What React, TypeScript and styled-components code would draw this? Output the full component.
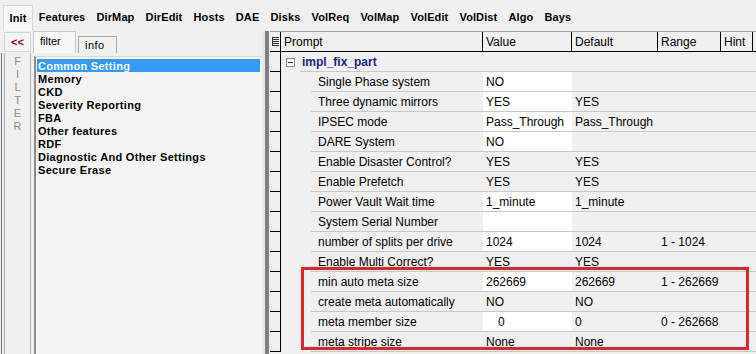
import styled, { createGlobalStyle, css } from 'styled-components'

const GlobalStyle = createGlobalStyle`
  html, body {
    margin: 0;
    padding: 0;
    background: #f0f0f0;
  }
  body {
    font-family: 'Liberation Sans', Arial, sans-serif;
  }
`

const Window = styled.div`
  position: relative;
  width: 756px;
  height: 354px;
  overflow: hidden;
  background: #f0f0f0;
  display: flex;
  flex-direction: column;
`

const MenuBar = styled.div`
  height: 31px;
  display: flex;
  align-items: flex-end;
  padding-left: 3px;
  box-sizing: border-box;
`

const MenuTab = styled.div<{ $active?: boolean }>`
  height: 26px;
  line-height: 25px;
  padding: 0 5.6px;
  font-size: 11px;
  font-weight: bold;
  letter-spacing: 0.1px;
  color: #000;
  box-sizing: border-box;
  ${({ $active }) =>
    $active &&
    css`
      background: #f7f7f7;
      border: 1px solid #d8d8d8;
      border-bottom: none;
    `}
`

const Body = styled.div`
  flex: 1;
  display: flex;
  min-height: 0;
`

const LeftPane = styled.div`
  width: 262px;
  display: flex;
  flex-direction: column;
`

const TabRow = styled.div`
  height: 22px;
  display: flex;
  align-items: flex-end;
  padding-left: 4px;
  gap: 2px;
`

const CollapseButton = styled.div`
  width: 27px;
  height: 20px;
  align-self: flex-start;
  margin-top: 1px;
  box-sizing: border-box;
  border: 1px solid #d4d4d4;
  background: #f4f4f4;
  color: #8a0a14;
  font-size: 11px;
  font-weight: bold;
  text-align: center;
  line-height: 18px;
`

const Tab = styled.div<{ $active?: boolean }>`
  box-sizing: border-box;
  font-size: 11px;
  color: #000;
  border: 1px solid #a8a8a8;
  border-bottom: none;
  padding: 0 6px;
  ${({ $active }) =>
    $active
      ? css`
          height: 22px;
          width: 43px;
          line-height: 18px;
          background: #f7f7f7;
          border-color: #c8c8c8;
        `
      : css`
          height: 17px;
          width: 39px;
          line-height: 17px;
          background: #f0f0f0;
          letter-spacing: 0.5px;
        `}
`

const LeftContent = styled.div`
  flex: 1;
  display: flex;
  border-left: 1px solid #6a7280;
  margin-left: 1px;
  min-height: 0;
`

const FilterStrip = styled.div`
  width: 25px;
  border-left: 1px solid #a6aebb;
  margin-left: 2px;
  border-right: 1px solid #b0b0b0;
  display: flex;
  flex-direction: column;
  align-items: center;
  padding-top: 2px;
  color: #8c8c8c;
  font-size: 11px;
  line-height: 13px;
`

const ListBox = styled.div`
  flex: 1;
  margin: 3px 0 0 3px;
  border-left: 2px solid #8c8c8c;
  border-top: 1px solid #d8d8d8;
  background: #f4f4f4;
  padding: 2px 2px 0 1px;
  box-sizing: border-box;
`

const ListItem = styled.div<{ $selected?: boolean }>`
  height: 13px;
  line-height: 14px;
  font-size: 11px;
  font-weight: bold;
  letter-spacing: 0.3px;
  padding-left: 1px;
  color: ${({ $selected }) => ($selected ? '#ffffff' : '#000000')};
  background: ${({ $selected }) => ($selected ? '#3399ff' : 'transparent')};
`

const Splitter = styled.div`
  width: 8px;
  display: flex;
  &::before {
    content: '';
    width: 3px;
    background: #e8e8e8;
  }
  &::after {
    content: '';
    width: 4px;
    background: #808080;
  }
`

const TableArea = styled.div`
  flex: 1;
  display: grid;
  grid-template-columns: 11px 202px 89px 86px 63px 32px 1fr;
  grid-auto-rows: 20px;
  align-content: start;
  border-top: 1px solid #a0a0a0;
`

const RowHead = styled.div`
  box-sizing: border-box;
  border-right: 1px solid #000;
  border-bottom: 1px solid #000;
  display: flex;
  align-items: center;
  justify-content: center;
`

const HeadCell = styled.div`
  box-sizing: border-box;
  border-right: 1px solid #000;
  border-bottom: 1px solid #000;
  font-size: 12px;
  line-height: 20px;
  padding-left: 3px;
  color: #000;
`

const HeadFill = styled.div`
  border-bottom: 1px solid #000;
`

const GroupCell = styled.div`
  grid-column: 2 / 8;
  display: flex;
  align-items: center;
`

const Expander = styled.div`
  width: 9px;
  height: 9px;
  margin: 0 5px 0 5px;
  box-sizing: border-box;
  border: 1px solid #8a8a8a;
  background: #fff;
  position: relative;
  &::after {
    content: '';
    position: absolute;
    left: 1px;
    right: 1px;
    top: 3px;
    height: 1px;
    background: #333;
  }
`

const GroupLabel = styled.div`
  flex: 1;
  align-self: stretch;
  font-size: 12px;
  font-weight: bold;
  color: #1b237a;
  line-height: 20px;
  padding-left: 2px;
  border-bottom: 1px solid #c8c8c8;
`

const PromptCell = styled.div`
  display: flex;
  padding-left: 30px;
`

const CellText = styled.div<{ $white?: boolean; $indent?: number }>`
  flex: 1;
  box-sizing: border-box;
  border-bottom: 1px solid #c8c8c8;
  font-size: 12px;
  line-height: 20px;
  color: #000;
  white-space: nowrap;
  overflow: hidden;
  padding-left: ${({ $indent }) => $indent ?? 3}px;
  background: ${({ $white }) => ($white ? '#ffffff' : 'transparent')};
`

const PromptText = styled(CellText)`
  padding-left: 7px;
`

const Highlight = styled.div`
  position: absolute;
  left: 301px;
  top: 267px;
  width: 448px;
  height: 83px;
  box-sizing: border-box;
  border: 3px solid #e0242c;
  pointer-events: none;
`

const ListIcon = () => (
  <svg width="7" height="10" viewBox="0 0 7 10">
    {[0, 2, 4, 6, 8].map((y) => (
      <rect key={y} x="0" y={y} width="7" height="1" fill="#333" />
    ))}
    <rect x="0" y="0" width="1" height="9" fill="#333" />
  </svg>
)

type Row = {
  prompt: string
  value: string
  def: string
  range?: string
  white?: boolean
  valueIndent?: number
}

const rows: Row[] = [
  { prompt: 'Single Phase system', value: 'NO', def: '', white: true },
  { prompt: 'Three dynamic mirrors', value: 'YES', def: 'YES', white: true },
  { prompt: 'IPSEC mode', value: 'Pass_Through', def: 'Pass_Through', white: true },
  { prompt: 'DARE System', value: 'NO', def: '', white: true },
  { prompt: 'Enable Disaster Control?', value: 'YES', def: 'YES' },
  { prompt: 'Enable Prefetch', value: 'YES', def: 'YES' },
  { prompt: 'Power Vault Wait time', value: '1_minute', def: '1_minute', white: true },
  { prompt: 'System Serial Number', value: '', def: '', white: true },
  { prompt: 'number of splits per drive', value: '1024', def: '1024', range: '1 - 1024', white: true },
  { prompt: 'Enable Multi Correct?', value: 'YES', def: 'YES' },
  { prompt: 'min auto meta size', value: '262669', def: '262669', range: '1 - 262669', white: true },
  { prompt: 'create meta automatically', value: 'NO', def: 'NO' },
  { prompt: 'meta member size', value: '0', def: '0', range: '0 - 262668', white: true, valueIndent: 15 },
  { prompt: 'meta stripe size', value: 'None', def: 'None' },
]

const menuTabs = ['Init', 'Features', 'DirMap', 'DirEdit', 'Hosts', 'DAE', 'Disks', 'VolReq', 'VolMap', 'VolEdit', 'VolDist', 'Algo', 'Bays']

const filters = ['Common Setting', 'Memory', 'CKD', 'Severity Reporting', 'FBA', 'Other features', 'RDF', 'Diagnostic And Other Settings', 'Secure Erase']

export default function App() {
  return (
    <>
      <GlobalStyle />
      <Window>
        <MenuBar>
          {menuTabs.map((t, i) => (
            <MenuTab key={t} $active={i === 0}>
              {t}
            </MenuTab>
          ))}
        </MenuBar>
        <Body>
          <LeftPane>
            <TabRow>
              <CollapseButton>&lt;&lt;</CollapseButton>
              <Tab $active>filter</Tab>
              <Tab>info</Tab>
            </TabRow>
            <LeftContent>
              <FilterStrip>
                {'FILTER'.split('').map((c, i) => (
                  <span key={i}>{c}</span>
                ))}
              </FilterStrip>
              <ListBox>
                {filters.map((f, i) => (
                  <ListItem key={f} $selected={i === 0}>
                    {f}
                  </ListItem>
                ))}
              </ListBox>
            </LeftContent>
          </LeftPane>
          <Splitter />
          <TableArea>
            <RowHead>
              <ListIcon />
            </RowHead>
            <HeadCell>Prompt</HeadCell>
            <HeadCell>Value</HeadCell>
            <HeadCell>Default</HeadCell>
            <HeadCell>Range</HeadCell>
            <HeadCell>Hint</HeadCell>
            <HeadFill />

            <RowHead />
            <GroupCell>
              <Expander />
              <GroupLabel>impl_fix_part</GroupLabel>
            </GroupCell>

            {rows.map((r) => (
              <>
                <RowHead key={r.prompt + '-h'} />
                <PromptCell key={r.prompt + '-p'}>
                  <PromptText>{r.prompt}</PromptText>
                </PromptCell>
                <CellText key={r.prompt + '-v'} $white={r.white} $indent={r.valueIndent}>
                  {r.value}
                </CellText>
                <CellText key={r.prompt + '-d'}>{r.def}</CellText>
                <CellText key={r.prompt + '-r'}>{r.range}</CellText>
                <CellText key={r.prompt + '-hint'} />
                <CellText key={r.prompt + '-f'} />
              </>
            ))}
          </TableArea>
        </Body>
        <Highlight />
      </Window>
    </>
  )
}
